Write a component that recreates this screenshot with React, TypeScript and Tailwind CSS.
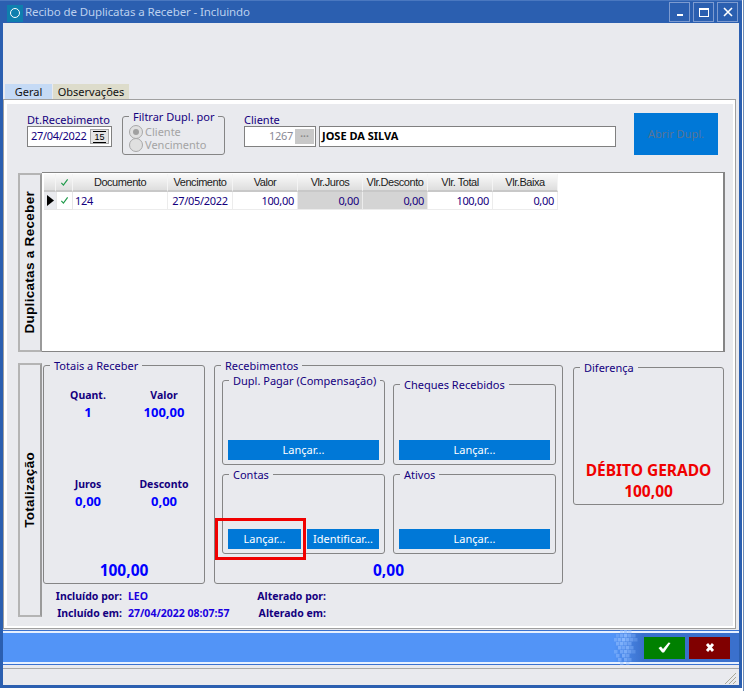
import type { ReactNode } from "react";

const ui = "font-['Noto_Sans',sans-serif]";
const headerFont = "font-['Liberation_Sans',sans-serif]";

const Group = ({ title, className, children }: { title: string; className: string; children?: ReactNode }) => (
  <div className={`relative border border-[#858585] rounded-[3px] ${className}`}>
    <span className="absolute -top-[7px] left-[6px] bg-[#e9eaee] px-1 text-[11px] leading-[14px] text-[#14007e] whitespace-nowrap">
      {title}
    </span>
    {children}
  </div>
);

const BlueButton = ({ className, children }: { className: string; children: ReactNode }) => (
  <button className={`block h-5 bg-[#0078d7] text-white text-[11px] leading-5 ${className}`}>{children}</button>
);

const VerticalTab = ({ label, className }: { label: string; className: string }) => (
  <div className={`w-6 shrink-0 flex items-center justify-center border-2 border-[#b4b4b4] border-r-[#9a9a9a] ${className}`}>
    <span className={`[writing-mode:vertical-rl] rotate-180 font-bold text-[13.5px] tracking-[0.3px] text-black whitespace-nowrap ${headerFont}`}>
      {label}
    </span>
  </div>
);

const Stat = ({ label, value }: { label: string; value: string }) => (
  <div className="flex flex-col items-center">
    <span className="text-[10.5px] leading-4 font-bold text-[#14007e]">{label}</span>
    <span className="text-[13px] leading-[18px] font-bold text-[#0000ff]">{value}</span>
  </div>
);

const GreenCheck = () => (
  <svg width="9" height="9" viewBox="0 0 10 10" fill="none">
    <path d="M1.5 5.5 L3.8 8 L8.5 1.5" stroke="#1f9a4a" strokeWidth="1.3" />
  </svg>
);

const headers = ["Documento", "Vencimento", "Valor", "Vlr.Juros", "Vlr.Desconto", "Vlr. Total", "Vlr.Baixa"];
const cells = [
  { text: "124", cls: "text-left pl-[2px] bg-white" },
  { text: "27/05/2022", cls: "text-center bg-white" },
  { text: "100,00", cls: "text-right pr-[3px] bg-white" },
  { text: "0,00", cls: "text-right pr-[3px] bg-[#d4d4d4]" },
  { text: "0,00", cls: "text-right pr-[3px] bg-[#d4d4d4]" },
  { text: "100,00", cls: "text-right pr-[3px] bg-white" },
  { text: "0,00", cls: "text-right pr-[3px] bg-white" },
];

const headCell = "h-[18px] flex items-center justify-center border-r border-b-2 border-r-[#f4f4f4] border-b-[#c8c8c8] bg-linear-to-b from-[#fafafa] to-[#dedede]";

const TitleButton = ({ children }: { children: ReactNode }) => (
  <div className="w-[21px] h-[20px] flex items-center justify-center border border-[#7d9bd0]">{children}</div>
);

const Mosaic = () => {
  const squares = [
    [6, 0, 0.5], [10, 0, 0.7], [14, 0, 0.5], [2, 4, 0.4], [6, 4, 0.65], [10, 4, 0.85], [14, 4, 0.6], [18, 4, 0.35],
    [0, 8, 0.5], [4, 8, 0.7], [8, 8, 0.9], [12, 8, 0.7], [16, 8, 0.5], [20, 8, 0.3],
    [2, 12, 0.6], [6, 12, 0.75], [10, 12, 0.6], [14, 12, 0.5], [4, 16, 0.65], [8, 16, 0.55], [12, 16, 0.7], [16, 16, 0.4],
    [0, 20, 0.45], [6, 20, 0.55], [10, 20, 0.7], [14, 20, 0.5], [18, 20, 0.3],
    [2, 24, 0.5], [8, 24, 0.65], [12, 24, 0.5], [4, 28, 0.55], [10, 28, 0.6], [14, 28, 0.4], [6, 32, 0.5], [12, 32, 0.4],
  ];
  return (
    <svg width="26" height="35" viewBox="0 0 26 35" className="shrink-0">
      {squares.map(([x, y, o], i) => (
        <rect key={i} x={x} y={y} width="3.5" height="3.5" fill="#8fbcff" opacity={o} />
      ))}
    </svg>
  );
};

export default function App() {
  return (
    <div className={`w-[744px] h-[691px] bg-white flex overflow-hidden ${ui}`}>
      <div className="w-[742px] h-[688px] flex flex-col bg-[#2b5fb0] px-[3px] pb-[3px] shadow-[inset_0_1px_0_#4a78c0]">
        {/* titulo */}
        <div className="h-[23px] shrink-0 flex items-center">
          <div className="w-[16px] h-[17px] ml-[4px] mt-[3px] bg-[#0f7fae] flex items-center justify-center">
            <div className="w-[10px] h-[10px] rounded-full border-[1.5px] border-white" />
          </div>
          <span className="ml-[2px] text-[11.5px] tracking-[-0.1px] text-[#bcd0ee] whitespace-nowrap">Recibo de Duplicatas a Receber - Incluindo</span>
          <div className="ml-auto flex gap-[3px] mr-[1px] mt-[1px]">
            <TitleButton><div className="w-[6px] h-[2px] mt-[5px] bg-white" /></TitleButton>
            <TitleButton><div className="w-[10px] h-[9px] border border-t-2 border-white" /></TitleButton>
            <TitleButton>
              <svg width="10" height="10" viewBox="0 0 10 10"><path d="M1 1 L9 9 M9 1 L1 9" stroke="white" strokeWidth="1.6" /></svg>
            </TitleButton>
          </div>
        </div>

        <div className="flex-1 flex flex-col bg-[#e9eaee]">
          {/* abas */}
          <div className="h-[76px] shrink-0 flex items-end pl-[2px]">
            <div className="w-[47px] h-[15px] bg-[#c5daf5] text-center text-[11px] leading-[15px] text-[#111]">Geral</div>
            <div className="w-[76px] h-[15px] ml-[1px] bg-[#dddccb] text-center text-[11px] leading-[15px] text-[#111]">Observações</div>
          </div>

          {/* painel */}
          <div className="w-[733px] h-[530px] shrink-0 border border-[#a0a0a0]">
            <div className="h-full border-t-4 border-l-[3px] border-r-2 border-b-2 border-white pl-[11px]">
              {/* filtros */}
              <div className="h-[42px] mt-[9px] flex">
                <div className="ml-[9px] w-[85px] flex flex-col">
                  <span className="text-[11px] leading-[13px] text-[#14007e] whitespace-nowrap">Dt.Recebimento</span>
                  <div className="h-[21px] border border-[#808080] bg-white flex items-center pl-[3px]">
                    <span className="text-[11px] tracking-[-0.3px] text-[#14007e]">27/04/2022</span>
                    <div className="ml-auto mr-[2px] w-[19px] h-[15px] bg-[#e4e4e4] border border-[#a8a8a8] flex items-center justify-center">
                      <span className={`text-[9px] leading-[10px] border-y border-black px-px ${headerFont}`}>15</span>
                    </div>
                  </div>
                </div>
                <Group title="Filtrar Dupl. por" className="ml-[10px] mt-[3px] w-[103px] h-[39px] pt-[8px] pl-[6px]">
                  {["Cliente", "Vencimento"].map((o, i) => (
                    <div key={o} className="h-[13px] flex items-center gap-[2px]">
                      <div className="w-[14px] h-[14px] rounded-full border border-[#a8a8a8] bg-[#e0e0e0] flex items-center justify-center">
                        {i === 0 && <div className="w-[6px] h-[6px] rounded-full bg-[#a0a0a0]" />}
                      </div>
                      <span className="text-[11px] leading-[13px] text-[#a4a4a4]">{o}</span>
                    </div>
                  ))}
                </Group>
                <div className="ml-[19px] flex flex-col">
                  <span className="text-[11px] leading-[13px] text-[#14007e]">Cliente</span>
                  <div className="flex gap-[3px]">
                    <div className="w-[72px] h-[21px] border border-[#808080] bg-white flex items-center justify-end pr-[1px] gap-[2px]">
                      <span className="text-[11px] tracking-[-0.3px] text-[#8a8a96]">1267</span>
                      <div className="w-[19px] h-[15px] bg-[#c8c8c8] text-center text-[10px] leading-[14px] font-bold text-[#8a8a8a]">···</div>
                    </div>
                    <div className="w-[297px] h-[21px] border border-[#808080] bg-white flex items-center pl-[2px]">
                      <span className="text-[11px] font-bold text-black">JOSE DA SILVA</span>
                    </div>
                  </div>
                </div>
                <div className="ml-[18px] w-[84px] h-[42px] bg-[#0078d7] flex items-center justify-center">
                  <span className="text-[11px] text-[#5a7492]">Abrir Dupl.</span>
                </div>
              </div>

              {/* duplicatas */}
              <div className="mt-[17px] h-[180px] flex">
                <VerticalTab label="Duplicatas a Receber" className="mt-px h-[179px]" />
                <div className="w-[683px] border-2 border-[#858585] border-l-0 border-t border-b bg-white p-px">
                  <div className={`grid grid-cols-[12px_17px_95px_65px_65px_65px_65px_65px_65px] w-[514px] ml-px ${headerFont}`}>
                    <div className={headCell} />
                    <div className={headCell}><GreenCheck /></div>
                    {headers.map((h) => (
                      <div key={h} className={headCell}>
                        <span className="text-[11px] tracking-[-0.45px] text-[#1c1c1c]">{h}</span>
                      </div>
                    ))}
                    <div className="h-[18px] bg-[#e9eaee] border-b border-[#e6e6e6] flex items-center justify-center">
                      <svg width="7" height="11" viewBox="0 0 7 11"><path d="M0 0 L7 5.5 L0 11 Z" fill="black" /></svg>
                    </div>
                    <div className="h-[18px] bg-white border-x border-b border-[#e6e6e6] flex items-center justify-center"><GreenCheck /></div>
                    {cells.map((c, i) => (
                      <div key={i} className={`h-[18px] border-r border-b border-[#ececec] text-[11px] tracking-[-0.3px] leading-[17px] text-[#14007e] ${ui} ${c.cls}`}>
                        {c.text}
                      </div>
                    ))}
                  </div>
                </div>
              </div>

              {/* totalizacao */}
              <div className="mt-[11px] flex">
                <VerticalTab label="Totalização" className="h-[254px]" />
                <div className="pl-px flex flex-col">
                  <div className="flex h-[219px] mt-[2px]">
                    <Group title="Totais a Receber" className="w-[162px] flex flex-col">
                      <div className="mt-[21px] ml-[6px] grid grid-cols-[76px_76px] gap-y-[55px]">
                        <Stat label="Quant." value="1" />
                        <Stat label="Valor" value="100,00" />
                        <Stat label="Juros" value="0,00" />
                        <Stat label="Desconto" value="0,00" />
                      </div>
                      <span className="mt-[50px] text-center text-[15.5px] leading-5 font-bold text-[#0000ff]">100,00</span>
                    </Group>

                    <Group title="Recebimentos" className="ml-[9px] w-[349px] flex flex-col">
                      <div className="mt-[14px] ml-[7px] grid grid-cols-[163px_163px] gap-x-2 gap-y-[9px] items-end">
                        <Group title="Dupl. Pagar (Compensação)" className="h-[85px] flex items-end px-[5px] pb-[4px]">
                          <BlueButton className="w-full">Lançar...</BlueButton>
                        </Group>
                        <Group title="Cheques Recebidos" className="h-[81px] flex items-end px-[5px] pb-[4px]">
                          <BlueButton className="w-full">Lançar...</BlueButton>
                        </Group>
                        <Group title="Contas" className="h-[80px] flex items-end gap-[6px] px-[5px] pb-[4px]">
                          <div className="relative w-[73px]">
                            <BlueButton className="w-full">Lançar...</BlueButton>
                            <div className="absolute -left-[13px] -top-[11px] w-[91px] h-[42px] border-[3px] border-[#f00000]" />
                          </div>
                          <BlueButton className="w-[72px]">Identificar...</BlueButton>
                        </Group>
                        <Group title="Ativos" className="h-[80px] flex items-end px-[5px] pb-[4px]">
                          <BlueButton className="w-full">Lançar...</BlueButton>
                        </Group>
                      </div>
                      <span className="mt-[6px] text-center text-[15.5px] leading-5 font-bold text-[#0000ff]">0,00</span>
                    </Group>

                    <Group title="Diferença" className="ml-[10px] mt-[2px] w-[151px] h-[138px] flex flex-col items-center justify-end pb-[2px]">
                      <span className="text-[15.5px] leading-[21px] font-bold text-[#f00000] whitespace-nowrap">DÉBITO GERADO</span>
                      <span className="text-[15.5px] leading-[21px] font-bold text-[#f00000]">100,00</span>
                    </Group>
                  </div>

                  <div className="mt-[4px] grid grid-cols-[79px_123px_69px_1fr] gap-x-[6px] gap-y-[1px] text-[10.5px] leading-4 font-bold">
                    <span className="text-right text-[#14007e] whitespace-nowrap">Incluído por:</span>
                    <span className="text-[#1a00e0]">LEO</span>
                    <span className="text-right text-[#14007e] whitespace-nowrap">Alterado por:</span>
                    <span />
                    <span className="text-right text-[#14007e] whitespace-nowrap">Incluído em:</span>
                    <span className="text-[#1a00e0] whitespace-nowrap">27/04/2022 08:07:57</span>
                    <span className="text-right text-[#14007e] whitespace-nowrap">Alterado em:</span>
                    <span />
                  </div>
                </div>
              </div>
            </div>
          </div>

          {/* rodape */}
          <div className="mt-[1px] h-[35px] shrink-0 bg-[#3a72d0] flex py-px">
            <div className="flex-1 flex items-stretch border-y-2 border-[#e6f0ff] bg-linear-to-r from-[#5294f7] from-[83%] to-[#3a70cc] to-[87%]">
              <div className="ml-auto flex items-center">
                <Mosaic />
                <button className="ml-[4px] w-[41px] h-[22px] bg-[#008000] flex items-center justify-center">
                  <svg width="13" height="11" viewBox="0 0 13 11"><path d="M0.5 6 L3 4.5 L5 7 L10.5 0.5 L12.5 1 L6 10.5 L4.2 10.5 Z" fill="white" /></svg>
                </button>
                <button className="ml-[4px] mr-[9px] w-[41px] h-[22px] bg-[#800000] flex items-center justify-center">
                  <svg width="10" height="9" viewBox="0 0 10 9"><path d="M2 1 L8 8 M8 1 L2 8" stroke="white" strokeWidth="2.8" /></svg>
                </button>
              </div>
            </div>
          </div>

          {/* status */}
          <div className="mt-[3px] flex-1 border-t border-[#a8a8a8] flex justify-end items-end pr-[3px] pb-px">
            <svg width="11" height="11" viewBox="0 0 11 11">
              <path d="M0 11 L11 0 M4 11 L11 4 M8 11 L11 8" stroke="#a8a898" strokeWidth="1" />
            </svg>
          </div>
        </div>
      </div>
      <div className="ml-px w-px h-full bg-[#6f8db5]" />
    </div>
  );
}
